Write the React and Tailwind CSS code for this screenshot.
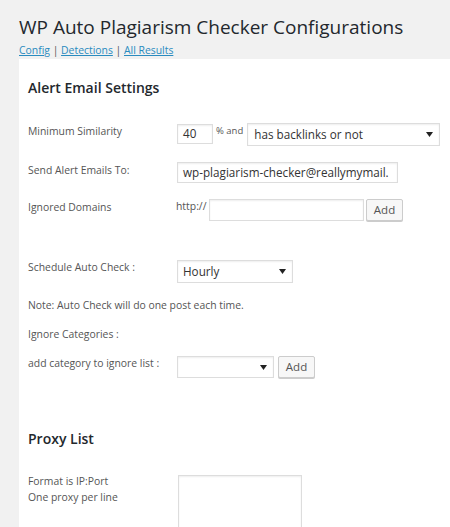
import React from "react";

const Arrow = () => (
  <svg width="7" height="5" viewBox="0 0 7 5" className="shrink-0">
    <path d="M0 0 L7 0 L3.5 5 Z" fill="#222" />
  </svg>
);

const Label = ({ children, className = "" }) => (
  <div className={"w-[149px] shrink-0 text-[10.4px] leading-[14px] text-[#555] " + className}>{children}</div>
);

const inputCls =
  "border border-[#ddd] bg-white shadow-[inset_0_1px_2px_rgba(0,0,0,0.07)] text-[11.7px] text-[#333] flex items-center";

const Btn = ({ className = "" }) => (
  <div className={"border border-[#ccc] bg-[#f7f7f7] rounded-[2px] shadow-[0_1px_0_#ccc] text-[11.5px] text-[#555] flex items-center justify-center " + className}>
    Add
  </div>
);

export default function App() {
  return (
    <div
      className="w-[450px] h-[527px] overflow-hidden bg-[#f1f1f1] pl-[19px]"
      style={{ fontFamily: '"Open Sans", sans-serif' }}
    >
      <h1 className="pt-[14px] text-[19px] leading-[26px] text-[#23282d] font-normal">
        WP Auto Plagiarism Checker Configurations
      </h1>
      <div className="mt-[2px] text-[10.4px] leading-[16px] text-[#555]">
        <span className="text-[#2a8bbf] underline">Config</span> |{" "}
        <span className="text-[#2a8bbf] underline">Detections</span> |{" "}
        <span className="text-[#2a8bbf] underline">All Results</span>
      </div>
      <div className="mt-[1px] bg-white h-[600px] pl-[9px]">
        <h2 className="pt-[19px] text-[14px] leading-[20px] font-semibold text-[#23282d]">Alert Email Settings</h2>

        <div className="mt-[26px] flex items-start">
          <Label>Minimum Similarity</Label>
          <div className={inputCls + " w-[36px] h-[20px] pl-[5px]"}>40</div>
          <div className="ml-[3px] text-[9.5px] leading-[12px] text-[#555] pt-[1px]">% and</div>
          <div className={inputCls + " ml-[4px] w-[193px] h-[23px] pl-[6px] pr-[6px] justify-between mt-[-1px]"}>
            <span>has backlinks or not</span>
            <Arrow />
          </div>
        </div>

        <div className="mt-[17px] flex items-start">
          <Label>Send Alert Emails To:</Label>
          <div className={inputCls + " w-[221px] h-[21px] pl-[5px] whitespace-nowrap overflow-hidden mt-[-1px]"}>
            wp-plagiarism-checker@reallymymail.
          </div>
        </div>

        <div className="mt-[16px] flex items-start">
          <Label className="pt-[1px]">Ignored Domains</Label>
          <div className="-ml-[1px] text-[10.4px] leading-[14px] text-[#555] w-[33px]">http://</div>
          <div className={inputCls + " w-[155px] h-[22px]"}></div>
          <Btn className="ml-[2px] w-[37px] h-[22px]" />
        </div>

        <div className="mt-[39px] flex items-start">
          <Label>Schedule Auto Check :</Label>
          <div className={inputCls + " w-[116px] h-[23px] pl-[5px] pr-[6px] justify-between"}>
            <span>Hourly</span>
            <Arrow />
          </div>
        </div>

        <div className="mt-[15px] text-[10.4px] leading-[14px] text-[#555]">
          Note: Auto Check will do one post each time.
        </div>
        <div className="mt-[15px] text-[10.4px] leading-[14px] text-[#555]">Ignore Categories :</div>

        <div className="mt-[15px] flex items-start">
          <Label>add category to ignore list :</Label>
          <div className={inputCls + " w-[97px] h-[22px] pr-[6px] justify-end"}>
            <Arrow />
          </div>
          <Btn className="ml-[4px] w-[37px] h-[22px]" />
        </div>

        <h2 className="mt-[51px] text-[14px] leading-[20px] font-semibold text-[#23282d]">Proxy List</h2>

        <div className="mt-[24px] flex items-start">
          <Label className="leading-[16px]">
            Format is IP:Port
            <br />
            One proxy per line
          </Label>
          <div className="border border-[#ddd] shadow-[inset_0_1px_2px_rgba(0,0,0,0.07)] w-[124px] h-[80px] ml-[1px] mt-[2px]"></div>
        </div>
      </div>
    </div>
  );
}
